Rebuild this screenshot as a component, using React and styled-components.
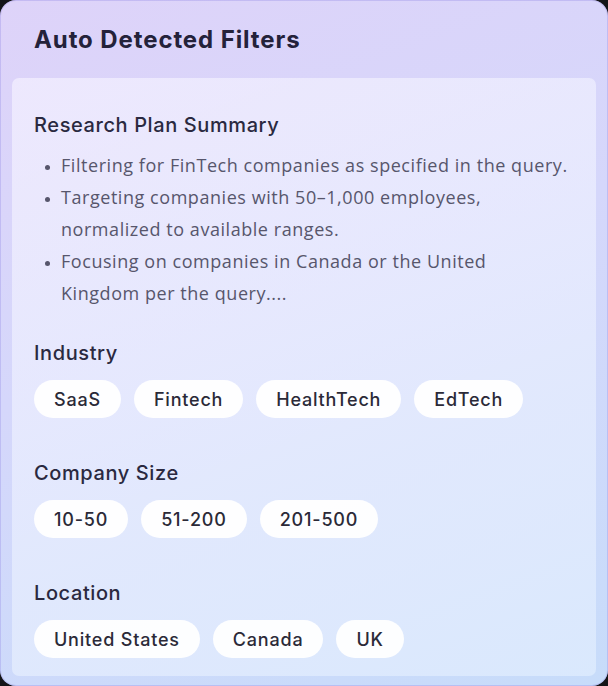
import styled, { createGlobalStyle } from "styled-components";

const GlobalStyle = createGlobalStyle`
    html, body {
        margin: 0;
        padding: 0;
        background: #141418;
    }
    * {
        box-sizing: border-box;
    }
`;

const Card = styled.div`
    width: 608px;
    height: 686px;
    border-radius: 16px;
    overflow: hidden;
    display: flex;
    flex-direction: column;
    padding: 0 12px 10px;
    background: linear-gradient(160deg, #ded3f9 0%, #d5d7fb 45%, #c7dcfa 100%);
    box-shadow: inset 0 0 0 1px rgba(150, 140, 230, 0.35);
`;

const Header = styled.div`
    height: 78px;
    display: flex;
    align-items: center;
    padding: 0 22px;
`;

const Title = styled.h1`
    margin: 0;
    font-family: Inter, "Noto Sans", sans-serif;
    font-size: 24px;
    font-weight: 700;
    color: #24223a;
    letter-spacing: 0.9px;
`;

const Panel = styled.div`
    flex: 1;
    border-radius: 7px;
    padding: 34px 22px 18px;
    display: flex;
    flex-direction: column;
    background: linear-gradient(160deg, rgba(244, 240, 255, 0.72) 0%, rgba(236, 242, 255, 0.62) 60%, rgba(230, 241, 255, 0.6) 100%);
`;

const Heading = styled.h2`
    margin: 0;
    font-family: Inter, "Noto Sans", sans-serif;
    font-size: 20px;
    line-height: 26px;
    font-weight: 500;
    letter-spacing: 0.6px;
    color: #2a2940;
`;

const Summary = styled.div`
    display: flex;
    flex-direction: column;
    gap: 11px;
    margin-bottom: 31px;
`;

const Bullets = styled.ul`
    margin: 0;
    padding: 0 6px 0 27px;
    font-family: "Open Sans", sans-serif;
    font-size: 18px;
    line-height: 32px;
    letter-spacing: 0.55px;
    color: #57566c;

    li::marker {
        font-size: 13px;
    }
`;

const Groups = styled.div`
    display: flex;
    flex-direction: column;
    gap: 42px;
`;

const Group = styled.div`
    display: flex;
    flex-direction: column;
    gap: 14px;
`;

const Chips = styled.div`
    display: flex;
    flex-wrap: wrap;
    gap: 13px;
`;

const Chip = styled.span`
    height: 38px;
    padding: 0 20px;
    border-radius: 19px;
    background: rgba(255, 255, 255, 0.94);
    display: inline-flex;
    align-items: center;
    font-family: Inter, "Noto Sans", sans-serif;
    font-size: 18px;
    font-weight: 500;
    letter-spacing: 0.8px;
    color: #2b2a38;
`;

const filters = [
    { title: "Industry", items: ["SaaS", "Fintech", "HealthTech", "EdTech"] },
    { title: "Company Size", items: ["10-50", "51-200", "201-500"] },
    { title: "Location", items: ["United States", "Canada", "UK"] },
];

const App = () => {
    return (
        <>
            <GlobalStyle />
            <Card>
                <Header>
                    <Title>Auto Detected Filters</Title>
                </Header>
                <Panel>
                    <Summary>
                        <Heading>Research Plan Summary</Heading>
                        <Bullets>
                            <li>Filtering for FinTech companies as specified in the query.</li>
                            <li>Targeting companies with 50–1,000 employees, normalized to available ranges.</li>
                            <li>Focusing on companies in Canada or the United Kingdom per the query....</li>
                        </Bullets>
                    </Summary>
                    <Groups>
                        {filters.map((f) => (
                            <Group key={f.title}>
                                <Heading>{f.title}</Heading>
                                <Chips>
                                    {f.items.map((item) => (
                                        <Chip key={item}>{item}</Chip>
                                    ))}
                                </Chips>
                            </Group>
                        ))}
                    </Groups>
                </Panel>
            </Card>
        </>
    );
};

export default App;
